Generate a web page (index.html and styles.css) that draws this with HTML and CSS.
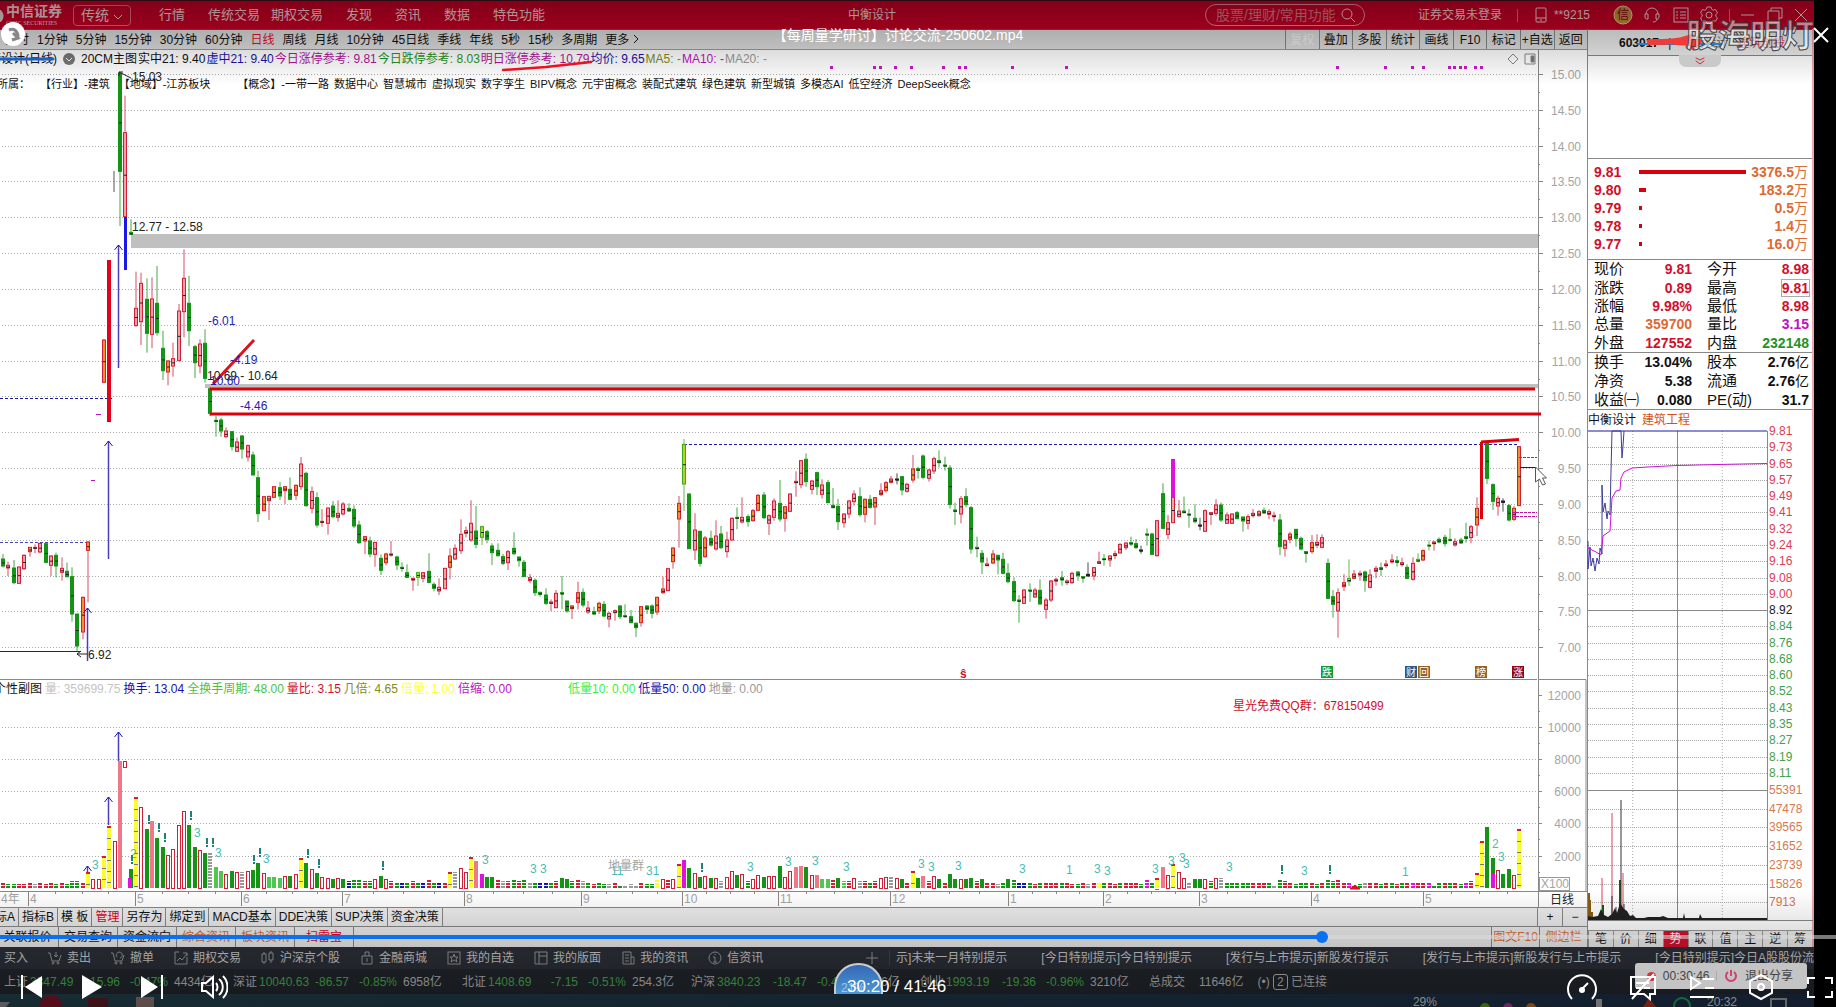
FILE: index.html
```html
<!DOCTYPE html>
<html lang="zh-CN">
<head>
    <meta charset="UTF-8">
    <meta name="viewport" content="width=device-width, initial-scale=1.0">
    <title>【每周量学研讨】讨论交流-250602.mp4</title>
    <link rel="stylesheet" href="styles.css">
</head>
<body>
<div class="player">
    <div class="app">
        <!-- Title bar -->
        <header class="title-bar">
            <div class="brand"><strong>中信证券</strong><small>CITIC SECURITIES</small></div>
            <button class="mode-button">传统
                <svg width="10" height="6" viewBox="0 0 10 6"><path d="M1 1l4 4 4-4"/></svg>
            </button>
            <nav class="main-nav">
                <a href="#">行情</a>
                <span class="nav-pair"><a href="#">传统交易</a><a href="#">期权交易</a></span>
                <a href="#">发现</a><a href="#">资讯</a><a href="#">数据</a><a href="#">特色功能</a>
            </nav>
            <span class="stock-title">中衡设计</span>
            <label class="search">
                <input type="text" placeholder="股票/理财/常用功能" aria-label="搜索">
                <svg width="16" height="16" viewBox="0 0 16 16"><circle cx="7" cy="7" r="5"/><path d="M11 11l4 4"/></svg>
            </label>
            <div class="account">
                <span>证券交易未登录</span>
                <i class="bar"></i>
                <span class="phone"><svg width="14" height="16" viewBox="0 0 14 16"><rect x="2" y="1" width="10" height="14" rx="1"/><path d="M2 11h10M6 13h2"/></svg>**9215</span>
            </div>
            <div class="window-icons">
                <button aria-label="信"><svg width="20" height="20" viewBox="0 0 20 20"><circle cx="10" cy="10" r="9" class="gold"/><text x="10" y="14" class="gold-text">信</text></svg></button>
                <button aria-label="客服"><svg width="18" height="18" viewBox="0 0 18 18"><path d="M3 8a6 6 0 0 1 12 0M2 8h3v5H3.500a2 2 0 0 1-1.500-2zM16 8h-3v5h1.500a2 2 0 0 0 1.500-2zM14 13c0 2-2 3-4 3"/></svg></button>
                <button aria-label="列表"><svg width="18" height="18" viewBox="0 0 18 18"><rect x="2" y="2" width="14" height="14"/><path d="M4 6h2M8 6h6M4 9h2M8 9h6M4 12h2M8 12h6"/></svg></button>
                <button aria-label="设置"><svg width="18" height="18" viewBox="0 0 18 18"><path d="M7 1h4l.6 2.300 1.600.9 2.300-.7 2 3.400-1.700 1.600v1.800l1.700 1.600-2 3.400-2.300-.7-1.600.9L11 17.500H7l-.6-2-1.600-.9-2.300.7-2-3.400 1.700-1.600V8.500L.5 6.900l2-3.400 2.300.7 1.600-.9z"/><circle cx="9" cy="9" r="3"/></svg></button>
                <i class="bar"></i>
                <button aria-label="最小化"><svg width="16" height="16" viewBox="0 0 16 16"><path d="M1 8h13"/></svg></button>
                <button aria-label="还原"><svg width="16" height="16" viewBox="0 0 16 16"><path d="M4 4V1h11v10h-3M1 4h11v11H1z"/></svg></button>
                <button aria-label="关闭"><svg width="16" height="16" viewBox="0 0 16 16"><path d="M2 2l12 12M14 2L2 14"/></svg></button>
            </div>
        </header>

        <div class="workspace">
            <section class="chart-side">
                <!-- Period bar -->
                <div class="period-bar">
                    <div class="periods">
                        <button>分时</button><button>1分钟</button><button>5分钟</button><button>15分钟</button><button>30分钟</button><button>60分钟</button><button class="active">日线</button><button>周线</button><button>月线</button><button>10分钟</button><button>45日线</button><button>季线</button><button>年线</button><button>5秒</button><button>15秒</button><button>多周期</button><button>更多
                            <svg width="6" height="10" viewBox="0 0 6 10"><path d="M1 1l4 4-4 4"/></svg></button>
                    </div>
                    <div class="tools">
                        <button disabled>复权</button><button>叠加</button><button>多股</button><button>统计</button><button>画线</button><button>F10</button><button>标记</button><button>+自选</button><button>返回</button>
                    </div>
                </div>

                <div class="legend legend-top">
                    <span class="struck">衡设计(日线)</span>
                    <svg class="down" width="14" height="14" viewBox="0 0 14 14"><circle cx="7" cy="7" r="6"/><path d="M4 6l3 3 3-3"/></svg>
                    <span>20CM主图</span><span>实中21: 9.40</span><span class="navy">虚中21: 9.40</span><span class="purple">今日涨停参考: 9.81</span><span class="green">今日跌停参考: 8.03</span><span class="purple">明日涨停参考: 10.79</span><span class="navy">均价: 9.65</span><span class="olive">MA5: -</span><span class="magenta">MA10: -</span><span class="grey">MA20: -</span>
                    <svg class="panel-icons" width="30" height="14" viewBox="0 0 30 14"><path d="M6 2l5 5-5 5-5-5zM18 2h10v10H18z"/><path d="M24 4h3v6h-3z" fill="#777"/></svg>
                </div>
                <div class="price-area">
                    <svg id="price" class="price-chart"></svg>
                    <div class="concepts">
                        <span>所属：</span><span class="first">【行业】-建筑</span><span class="second">【地域】-江苏板块</span><span class="third">【概念】-一带一路</span><span>数据中心</span><span>智慧城市</span><span>虚拟现实</span><span>数字孪生</span><span>BIPV概念</span><span>元宇宙概念</span><span>装配式建筑</span><span>绿色建筑</span><span>新型城镇</span><span>多模态AI</span><span>低空经济</span><span>DeepSeek概念</span>
                    </div>
                </div>

                <div class="legend legend-volume">
                    <span class="cut">个性副图</span><span class="light">量: 359699.75</span><span class="navy">换手: 13.04</span><span class="lime">全换手周期: 48.00</span><span class="red">量比: 3.15</span><span class="olive">几倍: 4.65</span><span class="yellow">倍量: 1.00</span><span class="magenta">倍缩: 0.00</span><span class="bright after-gap">低量10: 0.00</span><span class="navy">低量50: 0.00</span><span class="grey">地量: 0.00</span>
                </div>
                <svg id="volume" class="volume-chart"></svg>

                <div class="tab-row">
                    <button>标A</button><button>指标B</button><button>模 板</button><button class="active">管理</button><button>另存为</button><button>绑定到</button><button>MACD基本</button><button>DDE决策</button><button>SUP决策</button><button>资金决策</button>
                    <div class="zoom"><button>+</button><button>−</button></div>
                </div>
                <div class="tab-row tab-row-wide">
                    <button>关联报价</button><button>交易查询</button><button>资金流向</button><button class="orange">综合资讯</button><button class="orange">板块资讯</button><button class="active">扫雷宝</button>
                    <div class="zoom"><button class="orange">图文F10</button><button class="orange">侧边栏</button></div>
                </div>
            </section>

            <!-- Quote panel -->
            <aside class="quote">
                <div class="quote-head"><b>603017</b><i>|</i><span>中衡设计</span><em>建筑创投</em></div>
                <div class="quote-blank"></div>
                <table class="depth">
                    <tr><th>9.81</th><td class="meter"><i style="width: 100%"></i></td><td>3376.5<u>万</u></td></tr>
                    <tr><th>9.80</th><td class="meter"><i style="width: 7%"></i></td><td>183.2<u>万</u></td></tr>
                    <tr><th>9.79</th><td class="meter"><i style="width: 3%"></i></td><td>0.5<u>万</u></td></tr>
                    <tr><th>9.78</th><td class="meter"><i style="width: 3%"></i></td><td>1.4<u>万</u></td></tr>
                    <tr><th>9.77</th><td class="meter"><i style="width: 3%"></i></td><td>16.0<u>万</u></td></tr>
                </table>
                <table class="facts">
                    <tr><th>现价</th><td class="red">9.81</td><th>今开</th><td class="red">8.98</td></tr>
                    <tr><th>涨跌</th><td class="red">0.89</td><th>最高</th><td class="red"><span class="boxed">9.81</span></td></tr>
                    <tr><th>涨幅</th><td class="red">9.98%</td><th>最低</th><td class="red">8.98</td></tr>
                    <tr><th>总量</th><td class="orange">359700</td><th>量比</th><td class="magenta">3.15</td></tr>
                    <tr><th>外盘</th><td class="red">127552</td><th>内盘</th><td class="green">232148</td></tr>
                </table>
                <table class="facts facts-last">
                    <tr><th>换手</th><td>13.04%</td><th>股本</th><td>2.76<u>亿</u></td></tr>
                    <tr><th>净资</th><td>5.38</td><th>流通</th><td>2.76<u>亿</u></td></tr>
                    <tr><th>收益㈠</th><td>0.080</td><th>PE(动)</th><td>31.7</td></tr>
                </table>
                <div class="mini-title"><span>中衡设计</span><b>建筑工程</b></div>
                <svg id="mini" class="mini-chart"></svg>
                <div class="side-tabs">
                    <button>笔</button><button>价</button><button>细</button><button class="active">势</button><button>联</button><button>值</button><button>主</button><button>逆</button><button>筹</button>
                </div>
            </aside>
        </div>

        <!-- Trade toolbar with scrolling news -->
        <div class="trade-bar">
            <a href="#">买入</a>
            <a href="#"><svg viewBox="0 0 14 14"><path d="M0 2h2l2 8h7l2-6M8 1v5M6 4l2 2 2-2"/><circle cx="5" cy="12" r="1"/><circle cx="10" cy="12" r="1"/></svg>卖出</a>
            <a href="#"><svg viewBox="0 0 14 14"><path d="M0 2h2l2 8h7l2-6M6 6a3 3 0 1 1 3 1"/><circle cx="5" cy="12" r="1"/><circle cx="10" cy="12" r="1"/></svg>撤单</a>
            <a href="#"><svg viewBox="0 0 14 14"><path d="M5 1H1v12h12V6M3 10l3-3 2 2 5-6M9 2h4v3"/></svg>期权交易</a>
            <a href="#"><svg viewBox="0 0 14 14"><path d="M3 1v2M3 11v2M1 3h4v8H1zM10 0v2M10 9v3M8 2h4v7H8z"/></svg>沪深京个股</a>
            <a href="#"><svg viewBox="0 0 14 14"><path d="M2 5h10v8H2zM5 5V1h4v4M7 7v4"/></svg>金融商城</a>
            <a href="#"><svg viewBox="0 0 14 14"><rect x="1" y="1" width="12" height="12"/><path d="M7 3l1 3h3L9 8l1 3-3-2-3 2 1-3-2-2h3z"/></svg>我的自选</a>
            <a href="#"><svg viewBox="0 0 14 14"><path d="M1 1h12v12H1zM5 1v12M5 5h8"/></svg>我的版面</a>
            <a href="#"><svg viewBox="0 0 14 14"><path d="M2 1h8v12H2zM4 4h4M4 7h4M4 10h4M10 6h3v7h-3"/></svg>我的资讯</a>
            <a href="#"><svg viewBox="0 0 14 14"><circle cx="7" cy="7" r="6"/><path d="M7 3v1M5 6h2v5M5 11h4"/></svg>信资讯</a>
            <div class="news">
                <button aria-label="添加"><svg viewBox="0 0 14 14"><path d="M7 1v12M1 7h12"/></svg></button>
                <span class="news-first">示]未来一月特别提示</span><span>[今日特别提示]今日特别提示</span><span>[发行与上市提示]新股发行提示</span><span>[发行与上市提示]新股发行与上市提示</span><span>[今日特别提示]今日A股股份流</span>
            </div>
        </div>

        <div class="index-bar">
            <div class="index"><span>上证</span><b>3347.49</b><b>-15.96</b><b>-0.47%</b><span>4434亿</span></div>
            <div class="index"><span>深证</span><b>10040.63</b><b>-86.57</b><b>-0.85%</b><span>6958亿</span></div>
            <div class="index"><span>北证</span><b>1408.69</b><b>-7.15</b><b>-0.51%</b><span>254.3亿</span></div>
            <div class="index"><span>沪深</span><b>3840.23</b><b>-18.47</b><b>-0.48%</b><span>2416亿</span></div>
            <div class="index"><span>创业</span><b>1993.19</b><b>-19.36</b><b>-0.96%</b><span>3210亿</span></div>
            <div class="total"><span>总成交</span><span>11646亿</span><span class="link">(•) <i>2</i> 已连接</span></div>
        </div>

        <div class="taskbar">
            <svg class="task-left" width="170" height="13"><circle cx="51" cy="12" r="11" fill="#7c1426"/><path d="M0 8h10l-4 5H0z" fill="#8a8a8a"/><rect x="88" y="4" width="20" height="9" fill="#5b1a24"/><rect x="136" y="3" width="18" height="10" fill="#8c7470"/></svg>
            <span>29%</span>
            <svg class="task-icons" width="270" height="13"><circle cx="48" cy="14" r="5" fill="#5a9a12"/><circle cx="71" cy="14" r="5" fill="#a03c8c"/><circle cx="94" cy="14" r="5" fill="#c06a20"/><path d="M162 5v8" stroke="#aaa" stroke-width="6"/><path d="M206 13l6-9 7 9" fill="#b0301c"/><circle cx="245" cy="12" r="8" fill="none" stroke="#18a050" stroke-width="2"/></svg>
            <span>20:32</span>
            <svg width="24" height="13"><path d="M4 13V5h15v8" stroke="#999" stroke-width="2" fill="none"/></svg>
        </div>
    </div>

    <!-- Screen sharing marks -->
    <div class="shade shade-top"></div>
    <div class="shade shade-bottom"></div>
    <svg class="pen-marks" width="1836" height="100">
        <path d="M503 70L546 67 591 62" stroke="#ed1020" stroke-width="2.500"/>
        <path d="M0 59h53" stroke="#1c62c4" stroke-width="3"/>
        <path d="M1638 44h84" stroke="#2a80c0" stroke-width="2"/>
        <path d="M1650 42c15 0 30 0 43-5l-18 5 22 1-4 4" stroke="#f43a36" stroke-width="6"/>
        <path d="M1679 55h42v5a7 7 0 0 1-7 7h-28a7 7 0 0 1-7-7z" fill="#c9c9c9" stroke="none"/>
        <path d="M1696 58l4 2 4-2M1696 61l4 3 4-3" stroke="#d8203c" stroke-width="1"/>
    </svg>
    <div class="watermark">股海明灯</div>
    <svg class="share-logo" width="26" height="26" viewBox="0 0 26 26"><circle cx="13" cy="13" r="12"/><path d="M9 9c5-2 9 1 9 7m-5-4l5 5-6 2" /></svg>
    <div class="share-pill"><i></i><span>00:30:46</span><em></em><svg width="14" height="14" viewBox="0 0 14 14"><path d="M4 3a5 5 0 1 0 6 0M7 1v6"/></svg><span>退出分享</span></div>
    <div class="ball"><span>21%</span></div>

    <!-- Player controls -->
    <h1 class="video-title">【每周量学研讨】讨论交流-250602.mp4</h1>
    <button class="close" aria-label="关闭"><svg width="16" height="16" viewBox="0 0 16 16"><path d="M1 1l14 14M15 1L1 15"/></svg></button>
    <input class="progress" type="range" min="0" max="2506" value="1808" aria-label="播放进度">
    <div class="controls">
        <div class="controls-left">
            <button aria-label="上一个"><svg width="24" height="24" viewBox="0 0 24 24"><path class="fill" d="M22 1v22L5 12z"/><path d="M2 0v24"/></svg></button>
            <button aria-label="播放"><svg width="24" height="24" viewBox="0 0 24 24"><path class="fill" d="M2 0l20 12L2 24z"/></svg></button>
            <button aria-label="下一个"><svg width="24" height="24" viewBox="0 0 24 24"><path class="fill" d="M1 1v22l17-11z"/><path d="M22 0v24"/></svg></button>
            <button aria-label="音量"><svg width="28" height="24" viewBox="0 0 28 24"><path d="M2 8h4l7-6v20l-7-6H2zM16 8c2 2 2 6 0 8M19 4c5 4 5 12 0 16M23 1c6 6 6 16 0 22"/></svg></button>
        </div>
        <span class="time">30:20 / 41:46</span>
        <div class="controls-right">
            <button aria-label="倍速"><svg width="32" height="28" viewBox="0 0 32 28"><path d="M6 26a14 14 0 1 1 20 0M16 16l6-6"/><circle class="fill" cx="16" cy="17" r="3"/></svg></button>
            <button aria-label="字幕"><svg width="28" height="28" viewBox="0 0 28 28"><path d="M2 4h24v17h-5v5l-6-5H2zM7 10h13M7 15h5M15 15h6M3 26L25 1"/></svg></button>
            <button aria-label="播放列表"><svg width="28" height="28" viewBox="0 0 28 28"><path d="M3 4l9 6-9 6zM15 6h11M17 15h9M2 24h24"/></svg></button>
            <button aria-label="设置"><svg width="28" height="28" viewBox="0 0 28 28"><path d="M14 2l11 6v12l-11 6-11-6V8z"/><circle cx="14" cy="14" r="3"/></svg></button>
            <button aria-label="全屏"><svg width="28" height="28" viewBox="0 0 28 28"><path d="M2 11V5h7M19 5h7v6M2 18v6h7M19 24h7v-6"/></svg></button>
        </div>
    </div>
</div>
<script src="chart.js"></script>
</body>
</html>
```

FILE: styles.css
```css
* {
    box-sizing: border-box;
}
body {
    margin: 0;
    background: #000;
    color: #111;
    font-family: "Liberation Sans", "Noto Sans CJK SC", sans-serif;
    font-size: 12px;
    line-height: 16px;
}
button {
    border: 0;
    padding: 0;
    margin: 0;
    background: none;
    color: inherit;
    font: inherit;
    white-space: nowrap;
    cursor: pointer;
}
a {
    color: inherit;
    text-decoration: none;
}
u {
    font-weight: normal;
    text-decoration: none;
}
svg {
    fill: none;
    stroke: currentColor;
    flex: none;
}
.player {
    position: relative;
    min-height: 100vh;
    overflow: hidden;
}
.app {
    display: flex;
    flex-direction: column;
    min-height: 100vh;
    margin-right: 22px;
    background: #fff;
}

/* text colours */
.red { color: #d0102c; }
.green { color: #1f9426; }
.navy { color: #1a12a8; }
.purple { color: #b4149a; }
.magenta { color: #c010c4; }
.olive { color: #848a20; }
.grey { color: #999; }
.light { color: #c4c4c4; }
.lime { color: #4cc04c; }
.yellow { color: #ffff3c; }
.bright { color: #3cf03c; }
.orange { color: #dc6a34; }

/* title bar */
.title-bar {
    display: flex;
    align-items: center;
    height: 29px;
    background: #c40024;
    border-top: 1px solid #40101c;
    color: #f0c8cc;
}
.brand {
    width: 73px;
    padding-left: 6px;
    background: radial-gradient(circle at -4px 12px, transparent 3px, #e8c8cc 4px, #e8c8cc 7px, transparent 8px);
    font-family: "Liberation Serif", "Noto Sans CJK SC", serif;
}
.brand strong {
    display: block;
    font-size: 14px;
    line-height: 16px;
}
.brand small {
    display: block;
    font-size: 6px;
    line-height: 6px;
}
.mode-button {
    width: 58px;
    height: 21px;
    border: 1px solid #d86a7a;
    border-radius: 4px;
    font-size: 14px;
}
.main-nav {
    display: flex;
    gap: 23px;
    margin-left: 28px;
    font-size: 13px;
}
.nav-pair {
    display: flex;
    gap: 11px;
}
.stock-title {
    flex: 1;
    padding-left: 303px;
}
.search {
    display: flex;
    align-items: center;
    width: 160px;
    height: 22px;
    padding: 0 10px;
    border: 1px solid #e08a94;
    border-radius: 11px;
    color: #f0c8cc;
}
.search input {
    width: 124px;
    border: 0;
    padding: 0;
    background: none;
    font: inherit;
    font-size: 14px;
    outline: none;
}
.search input::placeholder {
    color: #d8707e;
}
.account {
    display: flex;
    align-items: center;
    justify-content: space-between;
    width: 172px;
    margin-left: 53px;
}
.bar {
    width: 1px;
    height: 13px;
    background: #c86a78;
}
.phone {
    display: flex;
    align-items: center;
    gap: 6px;
}
.window-icons {
    display: flex;
    align-items: center;
    justify-content: space-between;
    width: 196px;
    margin: 0 5px 0 23px;
}
.window-icons svg {
    display: block;
}
.gold {
    fill: #c08a3c;
    stroke: #e8d090;
}

/* layout of the chart and the quote panel */
.workspace {
    display: grid;
    grid-template-columns: 1fr 227px;
}
.chart-side {
    min-width: 0;
    display: flex;
    flex-direction: column;
}
.period-bar {
    display: flex;
    justify-content: space-between;
    height: 21px;
    background: #dedede;
    border-top: 1px solid #555;
    border-bottom: 1px solid #999;
}
.periods {
    display: flex;
    align-items: center;
    gap: 8px;
    margin-left: 5px;
}
.periods .active {
    color: #e01030;
}
.tools {
    display: flex;
    width: 302px;
}
.tools button {
    flex: 1 1 0;
    min-width: 0;
    border-left: 1px solid #888;
}
.tools button:disabled {
    color: #f4f4f4;
}
.legend {
    display: flex;
    align-items: center;
    gap: 1px;
    height: 18px;
    white-space: nowrap;
}
.legend-top .struck {
    margin-left: -11px;
}
.legend-top .down {
    margin: 0 4px;
    fill: #777;
    stroke: none;
}
.down path {
    stroke: #fff;
    fill: none;
}
.panel-icons {
    margin-left: auto;
    margin-right: 50px;
    color: #888;
}
.legend-volume {
    gap: 3px;
    margin: 0 50px 2px 0;
    border-top: 1px solid #888;
}
.legend-volume .cut {
    margin-left: -6px;
}
.legend-volume .after-gap {
    margin-left: 53px;
}
.price-area {
    position: relative;
    height: 611px;
}
.price-chart,
.volume-chart,
.mini-chart {
    display: block;
    width: 100%;
    overflow: visible;
}
.price-chart {
    height: 611px;
}
.volume-chart {
    height: 208px;
}
.concepts {
    position: absolute;
    top: 8px;
    left: -3px;
    display: flex;
    gap: 5px;
    font-size: 11px;
    white-space: nowrap;
}
.concepts .first {
    margin-left: 5px;
}
.concepts .second {
    margin-left: 4px;
}
.concepts .third {
    margin-left: 22px;
}

/* svg parts */
svg text {
    stroke: none;
    fill: #a4a4a4;
    font-size: 12px;
}
svg .end {
    text-anchor: end;
}
svg .ink {
    fill: #222;
}
svg .blue-text {
    fill: #2a20b0;
}
svg .teal {
    fill: #48bcb4;
}
svg .gold-text {
    text-anchor: middle;
    fill: #8a0018;
}
svg .badge-text {
    fill: #fff;
    font-size: 10px;
}
svg .alert {
    fill: #d0102c;
}
svg .strong {
    fill: #d0102c;
    font-weight: bold;
}
svg .up {
    fill: #dc3c54;
}
svg .fall {
    fill: #44a04a;
}
svg .amount {
    fill: #d87850;
}

/* tab rows */
.tab-row {
    display: flex;
    height: 19px;
    background: #ececec;
    border-top: 1px solid #888;
}
.tab-row > button {
    padding: 0 3px;
    border-right: 1px solid #888;
}
.tab-row > button:first-child {
    padding-left: 0;
    margin-left: -5px;
}
.tab-row .active {
    color: #e0001c;
}
.tab-row-wide {
    height: 21px;
}
.tab-row-wide > button,
.tab-row-wide > button:first-child {
    width: 59px;
    margin-left: 0;
}
.zoom {
    display: flex;
    width: 96px;
    margin-left: auto;
}
.zoom button {
    flex: 1;
    border-left: 1px solid #888;
}
.tab-row:not(.tab-row-wide) .zoom {
    width: 50px;
}

/* quote panel */
.quote {
    display: flex;
    flex-direction: column;
    border-left: 1px solid #888;
    border-right: 2px solid #f0a8b0;
    background: #fff;
}
.quote-head {
    display: flex;
    align-items: center;
    gap: 9px;
    height: 27px;
    padding-left: 31px;
    border-top: 1px solid #555;
    border-bottom: 1px solid #888;
    background: #eee;
    white-space: nowrap;
}
.quote-head span {
    color: #567;
}
.quote-head em {
    font-style: normal;
    color: #d83c4c;
}
.quote-blank {
    height: 103px;
    border-bottom: 1px solid #888;
}
.quote table {
    width: 100%;
    border-collapse: collapse;
    border-top: 1px solid #888;
    font-size: 14px;
    line-height: 18px;
}
.quote th,
.quote td {
    height: 18px;
    padding: 0;
    white-space: nowrap;
}
.quote td {
    text-align: right;
    font-weight: bold;
}
.quote th {
    text-align: left;
}
.quote .depth {
    margin: 4px 0 6px;
    border-top: 0;
    table-layout: fixed;
    color: #dc6a34;
}
.depth th {
    width: 51px;
    padding-left: 6px;
    color: #d0102c;
}
.depth td:last-child {
    width: 66px;
    padding-right: 4px;
}
.meter i {
    display: block;
    height: 4px;
    background: #d8000c;
}
.quote .facts {
    table-layout: fixed;
    height: 93px;
}
.quote .facts th {
    width: 46px;
    padding-left: 6px;
    font-size: 15px;
    font-weight: normal;
}
.quote .facts td {
    padding-right: 3px;
}
.facts td:nth-child(2) {
    width: 61px;
}
.facts th:nth-child(3) {
    padding-left: 12px;
}
.quote .facts-last {
    height: 58px;
    border-bottom: 1px solid #888;
}
.boxed {
    outline: 1px solid #aaa;
}
.mini-title {
    display: flex;
    gap: 6px;
    height: 21px;
    line-height: 21px;
}
.mini-title b {
    font-weight: normal;
    color: #d4501c;
}
.mini-chart {
    height: 499px;
}
.side-tabs {
    display: flex;
    height: 17px;
    line-height: 16px;
    background: #ececec;
}
.side-tabs button {
    flex: 1;
    border-left: 1px solid #999;
    border-top: 1px solid #999;
}
.side-tabs .active {
    background: #d8102c;
    color: #fff;
}

/* dark bars below */
.trade-bar {
    display: flex;
    align-items: center;
    gap: 20px;
    height: 22px;
    padding-left: 4px;
    background: #2c3038;
    color: #ccc;
    overflow: hidden;
    white-space: nowrap;
}
.trade-bar a {
    display: flex;
    align-items: center;
    gap: 5px;
}
.trade-bar svg {
    display: block;
    width: 14px;
    height: 14px;
    color: #999;
}
.news {
    flex: 1;
    display: flex;
    align-items: center;
    justify-content: flex-end;
    gap: 34px;
    min-width: 0;
}
.news button {
    margin-right: -24px;
}
.news-first {
    border-left: 1px solid #444;
    padding-left: 6px;
}
.index-bar {
    display: flex;
    align-items: center;
    height: 25px;
    padding-left: 4px;
    background: #22262c;
    color: #bbb;
    white-space: nowrap;
}
.index {
    display: grid;
    grid-template-columns: 26px 50px 40px 48px auto;
    width: 229px;
}
.index b {
    font-weight: normal;
    color: #48b050;
}
.index b:nth-child(n + 3) {
    text-align: right;
}
.index span:last-child {
    padding-left: 6px;
}
.total {
    display: flex;
    gap: 14px;
}
.total i {
    padding: 0 3px;
    border: 1px solid #bbb;
    border-radius: 3px;
    font-style: normal;
}
.taskbar {
    flex: 1 0 13px;
    display: flex;
    overflow: hidden;
    background: linear-gradient(90deg, #22404a, #1c2c44);
    color: #ccc;
}
.taskbar svg {
    stroke: none;
}
.taskbar .task-left {
    margin-right: auto;
}
.taskbar svg:last-child {
    margin: 0 23px 0 30px;
}

/* overlays */
.shade {
    position: absolute;
    left: 0;
    right: 22px;
    pointer-events: none;
}
.shade-top {
    top: 0;
    height: 85px;
    background: linear-gradient(rgba(0, 0, 0, 0.33), rgba(0, 0, 0, 0));
}
.shade-bottom {
    bottom: 0;
    height: 117px;
    background: linear-gradient(rgba(0, 0, 0, 0), rgba(0, 0, 0, 0.35));
}
.pen-marks {
    position: absolute;
    top: 0;
    left: 0;
    pointer-events: none;
    stroke-linecap: round;
}
.watermark {
    position: absolute;
    top: 14px;
    right: 22px;
    font-size: 32px;
    line-height: 44px;
    font-weight: bold;
    color: rgba(255, 255, 255, 0.5);
    -webkit-text-stroke: 1px rgba(50, 50, 50, 0.9);
}
.share-logo {
    position: absolute;
    top: 21px;
    left: 0;
    fill: #fff;
    stroke: none;
}
.share-logo path {
    fill: none;
    stroke: #888;
    stroke-width: 3;
}
.share-pill {
    position: absolute;
    right: 29px;
    bottom: 18px;
    display: flex;
    align-items: center;
    justify-content: space-between;
    width: 172px;
    height: 26px;
    padding: 0 14px 0 12px;
    border-radius: 3px;
    background: #c4c4c4;
    color: #444;
}
.share-pill i {
    width: 9px;
    height: 9px;
    border-radius: 50%;
    background: #d83038;
}
.share-pill em {
    width: 1px;
    height: 10px;
    background: #aaa;
}
.share-pill svg {
    stroke: #d04070;
    stroke-width: 2;
}
.ball {
    position: absolute;
    left: 834px;
    bottom: 13px;
    width: 49px;
    height: 31px;
    padding-top: 15px;
    border: 2px solid #ccc;
    border-bottom: 0;
    border-radius: 24px 24px 0 0;
    background: linear-gradient(#3468b8, #4c98d0);
    color: #a8c8e8;
    padding-left: 5px;
}
.video-title {
    position: absolute;
    top: 25px;
    left: 0;
    right: 40px;
    margin: 0;
    font-size: 14px;
    line-height: 20px;
    font-weight: normal;
    text-align: center;
    color: #fff;
}
.close {
    position: absolute;
    top: 27px;
    right: 7px;
    color: #fff;
}
.close svg {
    display: block;
    stroke-width: 2;
}
.progress {
    position: absolute;
    left: 0;
    bottom: 64px;
    width: 100%;
    height: 12px;
    margin: 0;
    appearance: none;
    background: linear-gradient(90deg, #0a70f0 72%, rgba(220, 220, 220, 0.55) 72%) center / 100% 4px no-repeat;
}
.progress::-webkit-slider-thumb {
    appearance: none;
    width: 12px;
    height: 12px;
    border-radius: 50%;
    background: #0a70f0;
}
.controls {
    position: absolute;
    left: 0;
    right: 0;
    bottom: 5px;
    display: flex;
    align-items: center;
    height: 30px;
    padding-left: 20px;
    color: #fff;
}
.controls svg {
    display: block;
    stroke-width: 2;
}
.controls .fill {
    fill: #fff;
    stroke: none;
}
.controls-left,
.controls-right {
    display: flex;
    align-items: center;
}
.controls-left {
    gap: 36px;
    width: 827px;
}
.controls-right {
    gap: 31px;
    width: 270px;
    margin-left: auto;
}
.time {
    font-size: 17px;
}
```

FILE: chart.js
```javascript
const STEP = 5.32;
const RED = '#d02038';
const GREEN = '#149414';
const NAVY = '#1c18a8';

// Candles: "high,top,bottom,low,kind", in thirds of a pixel from the base line.
// g falling, r rising, o orange, y yellow-green, k doji, - nothing
const blocks = [
    { start: 0, base: 330, rows: `672,687,708,713,g 695,706,714,738,r 690,714,758,762,g 710,711,760,762,r 673,676,716,720,r
        651,652,665,680,o 643,652,655,670,r 640,640,666,670,r 640,641,697,700,g 675,678,706,738,r 668,676,708,742,g
        682,715,727,752,r 698,724,740,742,g 712,740,852,875,g 852,852,948,963,g 800,802,906,928,o 633,636,661,817,o
        - - 28,30,157,158,o` },
    { start: 22, base: 0, rows: `218,220,514,678,g 287,398,650,650,r 658,697,703,703,g 815,925,977,980,r 818,850,965,1035,r
        835,898,1000,1058,g 832,897,1003,1044,r 798,910,998,1007,g 992,1045,1112,1140,g 1080,1083,1116,1156,o
        1028,1076,1098,1130,r 912,933,1082,1082,r 748,835,935,1012,r 827,910,992,1038,g` },
    { start: 36, base: 330, rows: `45,50,98,144,g 28,42,108,130,r -2,40,145,158,g 172,176,250,258,g 258,271,273,320,g
        263,270,303,320,g 292,303,320,325,r 303,305,350,362,g 323,336,364,364,r 315,318,357,386,g 343,347,381,395,r
        365,375,435,435,g 422,443,551,576,g 500,500,542,542,o 498,499,512,570,r 468,470,502,502,o 456,473,498,510,g
        468,470,482,522,o 442,478,508,510,g 463,466,496,510,o 381,402,470,480,r 425,430,527,530,g 470,485,535,550,r
        487,503,585,593,g 537,574,577,590,r 533,534,580,614,r 513,528,560,565,g 511,550,562,575,r 516,522,552,556,r
        520,535,543,546,g 526,538,588,594,g 572,585,638,642,g 618,620,633,672,o 620,633,672,682,g 636,637,673,710,r
        673,685,721,735,g 668,672,698,706,o 633,672,674,680,r 677,681,705,720,g 697,712,715,725,g 703,728,742,745,g
        743,745,750,782,r 725,728,742,768,y 726,728,745,757,r 670,724,757,760,g 757,763,775,784,g 745,772,783,795,r
        714,715,776,776,r 655,678,712,748,o 643,655,687,690,r 568,613,662,672,r 590,602,610,622,r 511,580,630,635,r
        528,603,643,655,g 587,590,622,645,y 600,605,628,640,g 640,648,668,705,g 640,661,677,680,g 672,680,700,706,g
        660,665,698,720,r 607,655,671,675,g 680,681,692,710,g 690,697,740,741,g 732,743,752,760,r 745,751,788,798,g
        785,787,793,800,g 775,795,820,825,g 808,816,820,843,r 780,790,833,835,r 738,788,792,838,g 812,813,843,848,g
        825,828,836,867,o 755,788,817,838,o 775,787,825,832,g 813,834,846,852,r 830,845,852,855,g 815,820,843,852,o
        813,823,858,862,g 846,850,867,892,r 838,842,848,872,r` },
    { start: 116, base: 400, rows: `615,618,650,657,g 613,647,650,652,g 630,650,668,670,g 667,670,683,711,g 618,620,668,680,o
        616,618,628,642,g 613,618,640,655,g 590,592,636,645,o 530,567,578,582,o 505,506,572,573,r 442,444,485,506,o
        288,310,357,443,o 117,133,252,333,y 280,282,446,447,g 340,390,450,480,r 392,394,490,500,g 408,414,470,473,o
        392,415,435,440,g 361,408,447,452,r 378,402,443,447,g 395,420,455,473,r 352,355,420,422,r 322,352,354,388,g
        292,352,366,370,r 343,350,365,380,g 327,332,362,365,o 282,286,331,333,o 276,285,353,357,g 343,347,370,405,r
        295,303,352,362,r 240,310,357,365,g 318,320,355,395,o 280,282,334,335,r 214,244,248,290,r 180,182,254,265,r
        160,178,245,260,g 240,243,268,283,r 215,218,260,285,g 238,255,283,296,r 240,248,308,310,g 264,316,323,325,g
        297,319,365,390,g 340,342,368,383,r 300,303,342,355,r 271,282,305,317,r 262,290,344,350,g 295,298,343,367,o
        285,298,322,326,g 292,293,321,375,o 250,272,284,288,o 243,248,272,278,o 228,237,247,250,o 220,237,240,253,k
        228,230,270,286,g 248,253,274,278,r 165,207,240,248,o 200,206,211,236,g 163,168,232,238,g 207,210,235,245,r
        170,176,213,222,r 151,182,188,203,g 170,195,198,212,g 195,204,313,326,g 308,330,334,375,g 288,296,342,370,r
        265,290,314,322,g 318,323,447,461,g 410,442,446,472,g 450,460,486,522,g 473,492,497,498,r 450,462,489,493,o
        464,466,480,523,g 458,478,520,523,g 490,520,545,550,g 532,545,602,606,g 586,600,604,668,g 567,570,610,612,r
        550,570,573,606,g 563,570,591,594,r 538,571,612,613,g 594,600,628,656,r 540,543,600,606,r 533,538,543,557,r
        513,533,540,557,g 538,543,548,555,r 515,520,548,552,r 513,516,527,542,g 528,530,534,548,g 487,523,528,528,k
        502,503,528,541,r 455,485,490,492,o 462,476,478,497,g 466,468,480,500,r 452,461,467,477,o 430,433,459,460,r
        427,429,443,450,r 410,428,432,438,g 417,431,443,446,g 437,450,453,461,k 385,402,404,437,g 398,402,463,466,g
        361,362,467,470,r 250,281,385,387,g 345,368,403,418,r 292,292,368,368,r 300,333,350,353,r 290,333,338,340,g
        327,342,344,383,g 313,355,365,370,g 353,375,378,391,k 328,332,394,395,r 337,338,343,375,r 298,315,340,347,r
        307,315,360,366,g 337,345,370,372,r` },
    { start: 231, base: 330, rows: `550,552,580,582,r 543,548,566,568,g 560,561,573,605,g 553,560,580,598,r 537,550,557,563,r
        540,545,557,560,r 533,541,549,552,g 538,545,553,568,r 545,556,560,575,r 552,570,650,675,g 628,632,655,680,r
        605,612,628,640,o 597,598,625,650,g 620,625,657,661,g 663,665,670,698,g 615,638,665,671,o 613,637,646,655,r
        613,623,652,655,r 686,700,805,807,g 780,800,823,863,g 775,788,843,923,r 733,758,770,783,o 688,745,755,768,y
        720,732,745,747,o 722,730,735,752,r 722,726,752,785,g 718,735,772,775,r 708,715,724,745,o 698,713,718,738,g
        690,702,707,714,o 673,690,696,700,r 678,692,697,710,g 683,698,704,710,r 703,712,745,748,g 682,700,748,752,r
        670,688,694,697,y 658,662,690,693,o 632,645,647,662,y 633,636,641,662,o 622,628,636,640,g 614,622,641,650,g
        595,628,630,635,y 625,635,645,650,r 623,630,639,642,g 578,620,625,638,g 585,590,623,640,r 502,535,585,618,o
        - 333,340,445,462,g 460,464,514,540,g 497,505,528,557,r 505,513,517,545,k 522,527,570,575,g 528,535,568,573,o
        348,350,527,527,o` }
];

// Volume: top of each bar (same unit, from 670) and its kind
const volumes = `640r 641g 643g 641r 642r 640r 643w 640r 641r 640r 643g 640r 641g 632g 634g 638r
    607y 626r 626r 557y 467y 512r 274p - 596g 380y 412r 477g 452p 503g 532g 556r 538r 466r 424r 466g 532g 541r 549g 549w
    590l 604l 611r 604g 606r 607w 604r 600g 578g 610r 620l 620l 624l 619r 618g 613r 563y 580g 598r 610g
    622r 624r 628g 624r 627g 633b 629g 630g 633r 634g 627r 619g 628r 632r 637g 638b 637g 632r 638g 640b
    630r 636g 638b 635r 607y 607w 595r 607r 562y 572p 613m 622g 621g 630r 632w 634r 631g 634r 630g 640w
    636g 640b 640b 638g 632r 624g 626g 632g 630r 632w 640g 642r 640g 642g 642w 640r 645g 645w 643w 645w
    635r 643g 643g 630y 627r 630r 627r 583y 569m 595g 610r 620g 618r 625g 624r 632w 620r 603r 615g 612r
    632g 628r 615r 621g 619r 618r 589g 620r 604r 591p 589p 591g 615r 616p 627l 628l 630r 625g 632l 632r
    624r 632w 632r 637g 632r 625r 620r 620w 625r 628g 636r 603y 624g 618p 632r 619r 627g 637r 612g 628g
    628r 628g 625g 632r 627g 635r 637r 643w 636g 627g 630g 638b 639b 638g 641r 640g 638r 640r 638r 640g
    640r 641r 642g 640r 642w 640r 636y 640g 638r 641r 640g 638r 640r 640r 643g 630m 638g 625y 592p 615r
    583y 607r 624r 640w 626g 628g 628r 632g 625r 625w 638g 640g 637g 640g 638g 636r 638r 638r 640g 645w
    630g 632r 638r 643g 640g 640g 640r 642g 640r 630g 632g 630r 637r 638m 648r 641g 640w 640r 640r
    643g 640r 640g 643r 640g 638r 640m 640r 638r 640m 645g 640g 640r 640g 640r 643g 636m 632r 608y 512y
    472g 564g 601r 613g 598g 614r 478y`;

const fills = { g: GREEN, r: '#f4a0a8', o: '#f09030', y: '#a8d820', k: '#222' };
const edges = { g: GREEN, r: RED, o: RED, y: '#40a818', k: '#222' };
const barColors = { g: GREEN, r: RED, y: '#fdfd30', p: '#ee7888', m: '#e010e0', b: '#1818a8', l: '#50c850', w: '#999' };

function line(x1, y1, x2, y2, color, width, dash) {
    return `<path d="M${x1} ${y1}L${x2} ${y2}" stroke="${color}" stroke-width="${width || 1}"${dash ? ` stroke-dasharray="${dash}"` : ''}/>`;
}
function rect(x, y, w, h, color) {
    return `<rect x="${x}" y="${y}" width="${w}" height="${h}" fill="${color}" stroke="none"/>`;
}
function text(x, y, value, cls) {
    return `<text x="${x}" y="${y}" class="${cls || ''}">${value}</text>`;
}
function arrow(x, top, bottom) {
    return line(x, top, x, bottom, '#4a3cc0', 1.5) +
        `<path d="M${x - 4} ${top + 5}L${x} ${top}L${x + 4} ${top + 5}" stroke="${NAVY}"/>`;
}
function barX(i) {
    return Math.round(3 + i * STEP);
}

function drawPrice() {
    const svg = document.getElementById('price');
    const width = svg.clientWidth;
    const axis = width - 49;
    let out = '';

    // Grid and scale
    for (let i = 0; i <= 16; i++) {
        const y = Math.round(74 + i * 35.83) + 0.5;
        out += line(2, y, axis, y, '#aaa', 1, '1 2');
        out += line(axis, y, axis + 5, y, '#888');
        if (i < 16) out += line(axis, y + 18, axis + 2, y + 18, '#888');
        out += text(width - 6, y + 4, (15 - i * 0.5).toFixed(2), 'end');
    }
    out += line(axis + 0.5, 50, axis + 0.5, 891, '#888');

    // Gap bands
    out += rect(131, 234, axis - 131, 14, '#c0c0c0');
    out += rect(205, 384, axis - 205, 4, '#c0c0c0');
    out += line(0, 398.5, 112, 398.5, NAVY, 1, '3 2');
    out += line(0, 542.5, 89, 542.5, '#4a44c0', 1, '3 2');
    out += line(684, 444.5, 1519, 444.5, NAVY, 1, '3 2');
    out += line(0, 651.5, 81, 651.5, NAVY);

    blocks.forEach(block => {
        block.rows.trim().split(/\s+/).forEach((row, n) => {
            if (row === '-') return;
            const parts = row.split(',');
            const [high, top, bottom, low] = parts.slice(0, 4).map(v => block.base + v / 3);
            const kind = parts[4];
            const x = barX(block.start + n);
            const height = Math.max(1, bottom - top);
            out += `<path d="M${x} ${high}V${low}" stroke="${edges[kind]}" opacity="0.8"/>`;
            out += `<rect x="${x - 1.5}" y="${top}" width="3" height="${height}" fill="${fills[kind]}" stroke="${edges[kind]}"/>`;
            out += rect(x - 1, (top + bottom) / 2, 3, 1, '#222');
        });
    });

    // Limit-up days
    out += rect(107, 260, 4, 162, '#e4001c');
    out += rect(124, 217, 3, 53, '#1818e8');
    out += line(114, 171, 114, 192, '#555');
    out += line(91, 480.5, 95, 480.5, '#c010c4') + line(96, 414.5, 101, 414.5, '#c010c4');
    out += rect(1171, 459, 4, 38, '#e010e0');
    out += arrow(118.5, 245, 368) + arrow(108.5, 441, 559) + arrow(87.5, 608, 661);
    out += line(210, 389, axis - 3, 389, '#dc000c', 3);
    out += line(210, 414, axis + 3, 414, '#dc000c', 3);
    out += line(213, 384, 254, 340, '#dc1420', 3);
    out += line(1481.5, 519, 1481.5, 442, '#dc000c', 3) + line(1481, 442, 1519, 439.5, '#dc000c', 3);
    out += line(1519, 457.5, 1537, 457.5, '#c010a0', 1, '3 1');
    out += line(1512, 512.5, 1537, 512.5, '#c010a0', 1, '3 1') + line(1512, 516.5, 1537, 516.5, '#c010a0', 1, '3 1');
    out += line(1520, 467.5, 1536, 467.5, '#222');

    // Signals along the top
    [831, 874, 880, 895, 911, 943, 959, 965, 1012, 1066, 1337, 1385, 1412, 1423, 1449, 1454, 1460, 1465, 1475, 1481]
        .forEach(x => { out += rect(x - 1, 66, 3, 3, '#c818c8'); });

    out += text(132, 81, '15.03', 'ink') + '<path d="M131 78l-12-6m0 4v-4h4" stroke="#222"/>';
    out += text(132, 231, '12.77 - 12.58', 'ink');
    out += text(208, 325, '-6.01', 'blue-text') + text(230, 364, '-4.19', 'blue-text');
    out += text(207, 380, '10.69 - 10.64', 'ink') + text(210, 385, '10.60', 'blue-text');
    out += text(240, 410, '-4.46', 'blue-text');
    out += text(88, 659, '6.92', 'ink') + '<path d="M87 654H77m4-3l-4 3 4 3" stroke="#222"/>';
    out += text(960, 678, 'ŝ', 'strong');
    [['跌', 1321, '#1c9c2c'], ['财', 1405, '#285888'], ['回', 1418, '#94602c'], ['榜', 1475, '#94602c'], ['涨', 1512, '#900818']]
        .forEach(b => { out += rect(b[1], 666, 12, 12, b[2]) + text(b[1] + 1, 676, b[0], 'badge-text'); });
    out += `<path d="M1535.500 467v15l4-3 3 6 3-1-3-6h4z" fill="#fff" stroke="#555"/>`;

    svg.innerHTML = `<g transform="translate(0,-68)">${out}</g>`;
}

function drawVolume() {
    const svg = document.getElementById('volume');
    const width = svg.clientWidth;
    const axis = width - 49;
    let out = '';

    [12000, 10000, 8000, 6000, 4000, 2000].forEach((v, i) => {
        const y = Math.round(694.5 + i * 32.2) + 0.5;
        if (i > 0) out += line(2, y, axis, y, '#aaa', 1, '1 2');
        out += line(axis, y, axis + 4, y, '#888') + line(axis, y + 16, axis + 2, y + 16, '#888');
        out += text(width - 6, y + 4, v, 'end');
    });

    volumes.trim().split(/\s+/).forEach((item, i) => {
        if (item === '-') return;
        const kind = item.slice(-1);
        const top = Math.round(670 + parseInt(item, 10) / 3);
        const x = barX(i);
        const height = 888 - top;
        if (height < 9 || kind === 'w') {
            out += line(x, 888, x, top, barColors[kind], 4, '2 1');
        } else if (kind === 'r') {
            out += `<rect x="${x - 1.5}" y="${top}.5" width="3" height="${height}" fill="#fff" stroke="${RED}"/>`;
        } else {
            out += rect(x - 2, top, 4, height, barColors[kind]);
            if (kind === 'y') out += rect(x - 2, top, 4, 2, RED) + line(x, top + 12, x, 888, '#776', 4, '1 10');
        }
    });
    out += `<rect x="123.500" y="761.500" width="3" height="6" stroke="${RED}"/>`;
    out += rect(128, 878, 4, 10, '#e010e0') + rect(1491, 874, 4, 14, '#e010e0');
    out += arrow(118.5, 732, 761) + arrow(108.5, 797, 825) + arrow(87.5, 866, 872);

    // Volume marks
    const marks = [[95, 865, 3], [133, 854, 2], [197, 833, 3], [218, 853, 3], [266, 859, 3], [485, 860, 3], [533, 869, 3],
        [543, 869, 3], [617, 871, '11'], [652, 871, '31'], [750, 867, 3], [788, 862, 3], [815, 861, 3], [846, 867, 3],
        [921, 864, 3], [931, 867, 3], [958, 866, 3], [1022, 869, 3], [1069, 870, 1], [1097, 869, 3], [1107, 871, 3],
        [1155, 869, 3], [1171, 861, 3], [1182, 858, 3], [1186, 864, 3], [1229, 867, 3], [1304, 871, 3], [1405, 872, 1],
        [1495, 844, 2], [1501, 857, 3]];
    marks.forEach(m => { out += text(m[0] - 3 * String(m[2]).length, m[1] + 4, m[2], 'teal'); });
    [[132, 859], [149, 819], [159, 827], [165, 837], [191, 815], [207, 842], [213, 842], [254, 859], [260, 852], [308, 853],
        [319, 863], [383, 865], [702, 867], [1282, 869], [1330, 869]]
        .forEach(m => { out += line(m[0], m[1] - 4, m[0], m[1] + 5, '#208078', 2, '6 1'); });
    out += text(608, 870, '地量群');
    out += text(1233, 710, '星光免费QQ群：678150499', 'alert');
    out += '<path d="M1350 889l5-4 5 4z" fill="#d81020" stroke="#d81020"/>';

    // Date axis
    out += line(0, 891.5, width, 891.5, '#888');
    out += `<path d="M${axis + 1} 679.500H${width - 1}V891" stroke="#888"/>`;
    out += text(1, 903, '4年');
    [[28, 4], [135, 5], [241, 6], [342, 7], [464, 8], [581, 9], [682, 10], [778, 11], [890, 12], [1008, 1], [1103, 2], [1199, 3], [1311, 4], [1423, 5]]
        .forEach((m, i, all) => {
            out += line(m[0] + 0.5, 892, m[0] + 0.5, 906, '#888') + text(m[0] + 2, 903, m[1]);
            const next = all[i + 1] ? all[i + 1][0] : 1535;
            for (let k = 1; k < 4; k++) {
                const x = Math.round(m[0] + (next - m[0]) * k / 4) + 0.5;
                out += line(x, 892, x, 894, '#888');
            }
        });
    out += `<rect x="${axis + 1.5}" y="877.500" width="30" height="13" fill="#fff" stroke="#999"/>` + text(axis + 3, 888, 'X100');
    out += line(axis + 0.5, 892, axis + 0.5, 907, '#888') + text(axis + 12, 904, '日线', 'ink');

    svg.innerHTML = `<g transform="translate(0,-699)">${out}</g>`;
}

function drawMini() {
    const svg = document.getElementById('mini');
    const right = svg.clientWidth - 45;
    let out = '';
    const prices = ['9.81', '9.73', '9.65', '9.57', '9.49', '9.41', '9.32', '9.24', '9.16', '9.08', '9.00', '8.92',
        '8.84', '8.76', '8.68', '8.60', '8.52', '8.43', '8.35', '8.27', '8.19', '8.11'];
    prices.forEach((p, i) => {
        const y = Math.round(431 + i * 16.28);
        if (i > 0) out += line(0, y + 0.5, right, y + 0.5, i === 11 ? '#888' : '#aaa', 1, i === 11 ? '' : '1 1');
        out += text(right + 2, y + 4, p, i < 11 ? 'up' : i === 11 ? 'ink' : 'fall');
    });
    [55391, 47478, 39565, 31652, 23739, 15826, 7913].forEach((v, i) => {
        const y = Math.round(790 + i * 18.7);
        out += line(0, y + 0.5, right, y + 0.5, i ? '#aaa' : '#888', 1, i ? '1 1' : '');
        out += text(right + 2, y + 4, v, 'amount');
    });
    out += line(right * 0.25, 431, right * 0.25, 920, '#aaa', 1, '1 2') + line(right * 0.75, 431, right * 0.75, 920, '#aaa', 1, '1 2');
    out += line(right / 2, 431, right / 2, 920, '#888') + line(right + 0.5, 431, right + 0.5, 920, '#888');
    out += line(0, 920.5, right + 46, 920.5, '#888');
    out += line(0, 431, right, 431, NAVY);

    // Price, average and volume of the day
    out += '<path d="M0 541V569L2 547 3 566 5 558 7 571 9 558 11 564 12 548 14 554V485L15 512 17 503 19 519 20 511 22 515 23 471 24 431H33L34 458 35 446 36 431" stroke="#3c3c9c"/>';
    out += `<path d="M0 548L8 552 13 555 15 536 22 531 24 498 28 491 32 490 33 478 36 472 44 468 60 467 89 465.500 130 464.500 ${right} 463.500" stroke="#d010d8"/>`;
    out += '<path d="M1 893v26M2 900v19M4 912v7" stroke="#8a5c10" stroke-width="2"/>';
    out += '<path d="M14 878v41M24 813v106M35 873v46" stroke="#dc4058"/><path d="M15 905v14M32 880v39" stroke="#106010" stroke-width="2"/>';
    out += '<path d="M33 800v119M24 896v23M28 907v12M36 904v15" stroke="#333"/>';
    out += `<path d="M0 919v-3l4 1 6-1 3-7 3 6 4 2 4-3 3-6 2 5 3-10 4 6 3 2 3 5 3-1 3 3h8l4-1h12l3-1 5 2h15l1-5 1 5h14l1-4 2 4H${right}V920H0z" fill="#222" stroke="none"/>`;
    svg.innerHTML = `<g transform="translate(0,-431)">${out}</g>`;
}

function drawAll() {
    drawPrice();
    drawVolume();
    drawMini();
}

drawAll();
window.addEventListener('resize', drawAll);
```
